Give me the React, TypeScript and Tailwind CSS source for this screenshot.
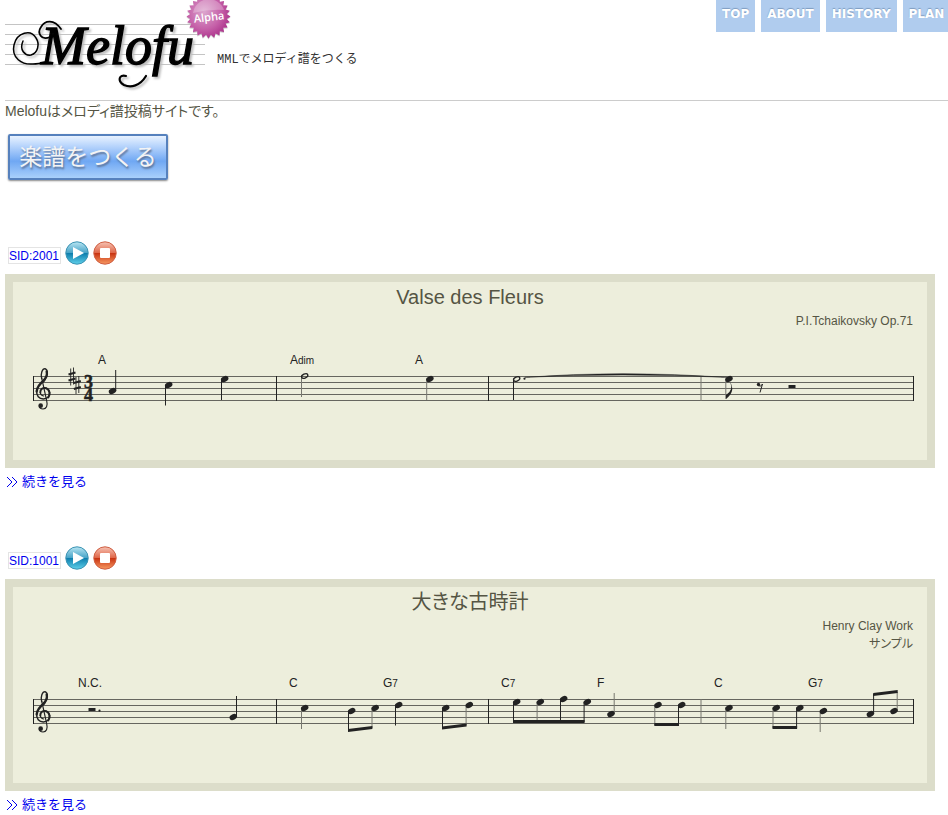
import type { ReactNode } from 'react';

const INK = '#222';
const GOTHIC = "font-['Liberation_Sans','Noto_Sans_CJK_JP',sans-serif]";

type NoteProps = { x: number; y: number; stem?: number; up?: boolean; half?: boolean; soft?: boolean };

/* A note head with a stem that runs to the height given in `stem`. */
function Note({ x, y, stem, up, half, soft }: NoteProps) {
  const sx = up ? x + 3.2 : x - 3.2;
  return (
    <g>
      {stem !== undefined && (
        <line x1={sx} x2={sx} y1={y} y2={stem} stroke={soft ? '#77776f' : INK} strokeWidth="1" />
      )}
      <ellipse
        cx={x}
        cy={y}
        rx={half ? 3.3 : 3.9}
        ry={half ? 2 : 2.8}
        fill={half ? 'none' : INK}
        stroke={half ? INK : 'none'}
        strokeWidth="1.3"
        transform={`rotate(-25 ${x} ${y})`}
      />
    </g>
  );
}

function Beam({ x1, y1, x2, y2 }: { x1: number; y1: number; x2: number; y2: number }) {
  return <polygon fill={INK} points={`${x1},${y1 - 1.5} ${x2},${y2 - 1.5} ${x2},${y2 + 1.5} ${x1},${y1 + 1.5}`} />;
}

function Clef() {
  return (
    <g transform="translate(25 30) scale(0.3333)" fill="none" stroke={INK} strokeLinecap="round">
      <path d="M50 56C46 40 52 26 60 26C70 30 69 46 60 58" strokeWidth="4" />
      <path d="M65 34C68 46 62 56 54 64" strokeWidth="7" />
      <path d="M58 60C46 70 36 80 35 94" strokeWidth="7" />
      <path d="M35 92C34 108 42 117 55 117C68 117 75 108 74 98C73 88 66 83 58 84" strokeWidth="4.5" />
      <path d="M70 112C76 104 75 90 64 85C54 81 45 88 46 97" strokeWidth="6" />
      <path d="M46 96C46 103 50 107 56 108" strokeWidth="3.5" />
      <path d="M50 54L65 122C69 138 64 147 54 147C48 147 44 144 43 140" strokeWidth="3.5" />
      <circle cx="47" cy="137" r="7" fill={INK} stroke="none" />
    </g>
  );
}

function Sharp({ x, y }: { x: number; y: number }) {
  return (
    <g stroke={INK}>
      <path d={`M${x - 1.3} ${y - 8}V${y + 9}M${x + 1.5} ${y - 9}V${y + 8}`} strokeWidth="0.9" />
      <path d={`M${x - 3.5} ${y - 2}L${x + 3.5} ${y - 4}M${x - 3.5} ${y + 4}L${x + 3.5} ${y + 2}`} strokeWidth="2" />
    </g>
  );
}

function Chord({ x, root, suffix }: { x: number; root: string; suffix?: string }) {
  return (
    <text x={x} y="34" fontSize="12" fill={INK}>
      {root}
      {suffix && <tspan fontSize="10">{suffix}</tspan>}
    </text>
  );
}

function Staff({ label, children }: { label: string; children: ReactNode }) {
  return (
    <svg viewBox="13 0 914 130" className="block w-full" role="img" aria-label={label}>
      <g stroke="#66665f" strokeWidth="1">
        {[46.5, 52.5, 58.5, 64.5, 70.5].map((y) => (
          <line key={y} x1="33" x2="914" y1={y} y2={y} />
        ))}
      </g>
      <g stroke={INK} strokeWidth="1">
        <line x1="33.5" x2="33.5" y1="46" y2="71" />
        <line x1="276.5" x2="276.5" y1="46" y2="71" />
        <line x1="488.5" x2="488.5" y1="46" y2="71" />
        <line x1="701" x2="701" y1="46" y2="71" stroke="#77776f" />
        <line x1="913.5" x2="913.5" y1="46" y2="71" />
      </g>
      <Clef />
      {children}
    </svg>
  );
}

function WaltzStaff() {
  return (
    <Staff label="Valse des Fleurs">
      <Sharp x={72} y={46.5} />
      <Sharp x={77.3} y={55} />
      <text fontFamily="'Liberation Serif', serif" fontWeight="bold" fontSize="18" fill={INK} stroke={INK} strokeWidth="0.5" textAnchor="middle">
        <tspan x="88.5" y="58">3</tspan>
        <tspan x="88.5" y="70.5">4</tspan>
      </text>
      <Chord x={98} root="A" />
      <Chord x={290} root="A" suffix="dim" />
      <Chord x={415} root="A" />
      <Note x={112.5} y={61} stem={40} up />
      <Note x={168.7} y={55} stem={75.5} />
      <Note x={224.7} y={49} stem={70} />
      <Note x={304.7} y={46} stem={67} half soft />
      <Note x={429.9} y={49} stem={70} soft />
      <Note x={516.7} y={49} stem={70} half />
      <circle cx="524.5" cy="48.7" r="1.1" fill={INK} />
      <path d="M525 47.3Q620 40 727 47.3Q620 42.8 525 47.3Z" fill={INK} stroke={INK} strokeWidth="0.5" />
      <Note x={729} y={49} stem={69} soft />
      <path d="M730 52Q734 60 726 65V69Q736 61 730 52Z" fill={INK} />
      <circle cx="758.5" cy="54.5" r="1.7" fill={INK} />
      <path d="M758 55.5Q761 57.5 762.5 54L760 62.5" fill="none" stroke={INK} strokeWidth="1" />
      <rect x="788.5" y="55" width="7" height="3" fill={INK} />
    </Staff>
  );
}

function ClockStaff() {
  return (
    <Staff label="大きな古時計">
      <Chord x={78} root="N.C." />
      <Chord x={289} root="C" />
      <Chord x={383} root="G" suffix="7" />
      <Chord x={501} root="C" suffix="7" />
      <Chord x={597} root="F" />
      <Chord x={714} root="C" />
      <Chord x={808} root="G" suffix="7" />
      <rect x="88.5" y="55" width="7" height="3" fill={INK} />
      <circle cx="99.5" cy="57.7" r="1.1" fill={INK} />
      <Note x={233.3} y={64} stem={43} up />
      <Note x={304.7} y={55} stem={76} soft />
      <Note x={351.7} y={58} stem={78} />
      <Note x={375.2} y={55} stem={75} soft />
      <Beam x1={348} y1={77.5} x2={372.4} y2={74.5} />
      <Note x={398.7} y={52} stem={72.5} />
      <Note x={445.7} y={55} stem={75} />
      <Note x={469.3} y={52} stem={72} soft />
      <Beam x1={442} y1={75} x2={466.6} y2={72} />
      <Note x={516.7} y={49} stem={69} />
      <Note x={540.3} y={49} stem={69} soft />
      <Note x={563.7} y={46} stem={69} />
      <Note x={587.3} y={49} stem={69} />
      <Beam x1={513} y1={68.5} x2={584.6} y2={68.5} />
      <Note x={611} y={61} stem={40} up soft />
      <Note x={658} y={52} stem={72} soft />
      <Note x={681.7} y={52} stem={72} />
      <Beam x1={654.3} y1={71.5} x2={679} y2={71.5} />
      <Note x={729} y={55} stem={76} soft />
      <Note x={776.2} y={55} stem={75} soft />
      <Note x={799.8} y={55} stem={75} />
      <Beam x1={772.5} y1={74.5} x2={797.1} y2={74.5} />
      <Note x={823.4} y={58} stem={79} soft />
      <Note x={870.4} y={61} stem={41} up />
      <Note x={894} y={58} stem={39} up soft />
      <Beam x1={873.2} y1={41.5} x2={897.7} y2={38.5} />
    </Staff>
  );
}

function Logo() {
  const burst = Array.from({ length: 48 }, (_, i) => {
    const r = i % 2 ? 18.5 : 22;
    const a = (i * Math.PI) / 24;
    return `${(208.5 + r * Math.cos(a)).toFixed(1)},${(16.5 + r * Math.sin(a)).toFixed(1)}`;
  }).join(' ');
  return (
    <svg width="236" height="96" viewBox="0 0 236 96" role="img" aria-label="Melofu Alpha" className="-ml-[5px] block shrink-0">
      <defs>
        <radialGradient id="seal" cx="0.4" cy="0.4" r="0.65">
          <stop offset="0" stopColor="#dca6ce" />
          <stop offset="0.6" stopColor="#c560a8" />
          <stop offset="1" stopColor="#a92e88" />
        </radialGradient>
      </defs>
      <g stroke="#c4c4c4">
        {[24.5, 34.5, 44.5, 54.5, 64.5].map((y) => (
          <line key={y} x1="5" x2="205" y1={y} y2={y} />
        ))}
      </g>
      <g className="drop-shadow-[2px_2px_1px_#bbbbbb]">
        <text x="41" y="64" fontFamily="'Liberation Serif', serif" fontStyle="italic" fontSize="54" stroke="#000" strokeWidth="1.4">
          Melofu
        </text>
        <g fill="none" stroke="#000" strokeLinecap="round">
          <path d="M23 41C19 50 25 56 31 55C38 53 40 44 36 38C31 29 17 32 14 45C11 58 22 65 33 64C38 64 42 63 46 62" strokeWidth="1.5" />
          <path d="M50 37C41 41 37 33 41 27C45 20 54 19 61 29" strokeWidth="1.8" />
          <path d="M146 76C140 86 131 88 124 85C117 81 119 74 126 76" strokeWidth="2.2" />
        </g>
      </g>
      <polygon points={burst} fill="#ccc" transform="translate(0 1)" />
      <polygon points={burst} fill="url(#seal)" />
      <path d="M193 13A16 16 0 0 1 224 10Q209 9 193 13Z" fill="#fff" opacity="0.25" />
      <text x="209" y="21" textAnchor="middle" fill="#fff" fontFamily="'Open Sans', sans-serif" fontWeight="600" fontSize="11" transform="rotate(-7 209 17)">
        Alpha
      </text>
    </svg>
  );
}

function OrbIcon({ kind, id }: { kind: 'play' | 'stop'; id: string }) {
  const play = kind === 'play';
  return (
    <svg width="24" height="24" viewBox="0 0 24 24" aria-hidden="true" className="block">
      <defs>
        <linearGradient id={id} x1="0" y1="0" x2="0" y2="1">
          <stop offset="0" stopColor={play ? '#b9e6f3' : '#f6c3b4'} />
          <stop offset="0.48" stopColor={play ? '#4aa5c8' : '#e0684a'} />
          <stop offset="0.52" stopColor={play ? '#0e7fae' : '#c93412'} />
          <stop offset="1" stopColor={play ? '#5fd0ea' : '#f79a62'} />
        </linearGradient>
      </defs>
      <circle cx="12" cy="12" r="11.2" fill={`url(#${id})`} stroke={play ? '#3c93b3' : '#cf5f43'} />
      {play ? <path d="M8 6L19 12L8 18Z" fill="#fff" /> : <rect x="7" y="7" width="10" height="10" rx="1" fill="#fff" />}
    </svg>
  );
}

type ScoreProps = { sid: string; title: string; credits: string[]; children: ReactNode };

function Score({ sid, title, credits, children }: ScoreProps) {
  return (
    <section>
      <div className="flex items-center gap-1 pl-[3px]">
        <a href={`#${sid}`} className="mt-1 h-[17px] w-[53px] whitespace-nowrap border border-[#e4e4e4] text-[12px] leading-4 text-[#0000ee]">
          SID:{sid}
        </a>
        <button type="button" aria-label={`Play ${title}`}>
          <OrbIcon kind="play" id={`play-${sid}`} />
        </button>
        <button type="button" aria-label={`Stop ${title}`}>
          <OrbIcon kind="stop" id={`stop-${sid}`} />
        </button>
      </div>
      <div className="mt-[9px] border-8 border-[#dcddca] bg-[#edeedc] text-[#555544]">
        <h2 className="text-center text-[20px] leading-[30px] [font-feature-settings:'palt']">{title}</h2>
        {credits.map((credit) => (
          <p key={credit} className="pr-[14px] text-right text-[12px] leading-[18px] [font-feature-settings:'palt']">
            {credit}
          </p>
        ))}
        {children}
      </div>
      <a href={`#more-${sid}`} className="mt-1 flex h-5 items-center gap-1 text-[13px] text-[#0000ee]">
        <svg width="13" height="12" viewBox="0 0 13 12" fill="none" stroke="currentColor" aria-hidden="true">
          <path d="M2 1L7 6L2 11M7 1L12 6L7 11" />
        </svg>
        続きを見る
      </a>
    </section>
  );
}

export default function App() {
  return (
    <div className={`overflow-hidden bg-white pl-[5px] text-[#555544] ${GOTHIC}`}>
      <header className="flex h-[101px] items-start border-b border-[#cccccc]">
        <h1>
          <Logo />
        </h1>
        <p className="-ml-[19px] mt-[51px] whitespace-nowrap font-['Liberation_Mono','Noto_Sans_CJK_JP',monospace] text-[12px] leading-[18px] text-[#333333]">
          MMLでメロディ譜をつくる
        </p>
        <nav className="ml-auto flex w-[232px] gap-[6px] overflow-hidden font-['DejaVu_Sans',sans-serif] text-[12px] font-bold leading-7 text-white">
          {['TOP', 'ABOUT', 'HISTORY', 'PLAN'].map((item) => (
            <a key={item} href={`#${item.toLowerCase()}`} className="h-8 shrink-0 bg-[#b0ccee] px-[6px] [text-shadow:0_-1px_1px_#7f9cc0]">
              {item}
            </a>
          ))}
        </nav>
      </header>
      <main className="pr-[13px]">
        <p className="text-[14px] leading-5 [font-feature-settings:'palt']">Melofuはメロディ譜投稿サイトです。</p>
        <button
          type="button"
          className="ml-[3px] mt-[13px] block h-[46px] w-40 rounded-xs border-2 border-[#5681bd] bg-linear-to-b from-[#e8f2ff] via-[#6fa7f3] via-60% to-[#a9d0fb] text-[23px] leading-none text-[#f4f4f4] shadow-[0_1px_2px_#888] [text-shadow:1px_2px_2px_#5b7193]"
        >
          楽譜をつくる
        </button>
        <div className="mt-[61px] flex flex-col gap-[54px]">
          <Score sid="2001" title="Valse des Fleurs" credits={['P.I.Tchaikovsky Op.71']}>
            <WaltzStaff />
          </Score>
          <Score sid="1001" title="大きな古時計" credits={['Henry Clay Work', 'サンプル']}>
            <ClockStaff />
          </Score>
        </div>
      </main>
    </div>
  );
}
